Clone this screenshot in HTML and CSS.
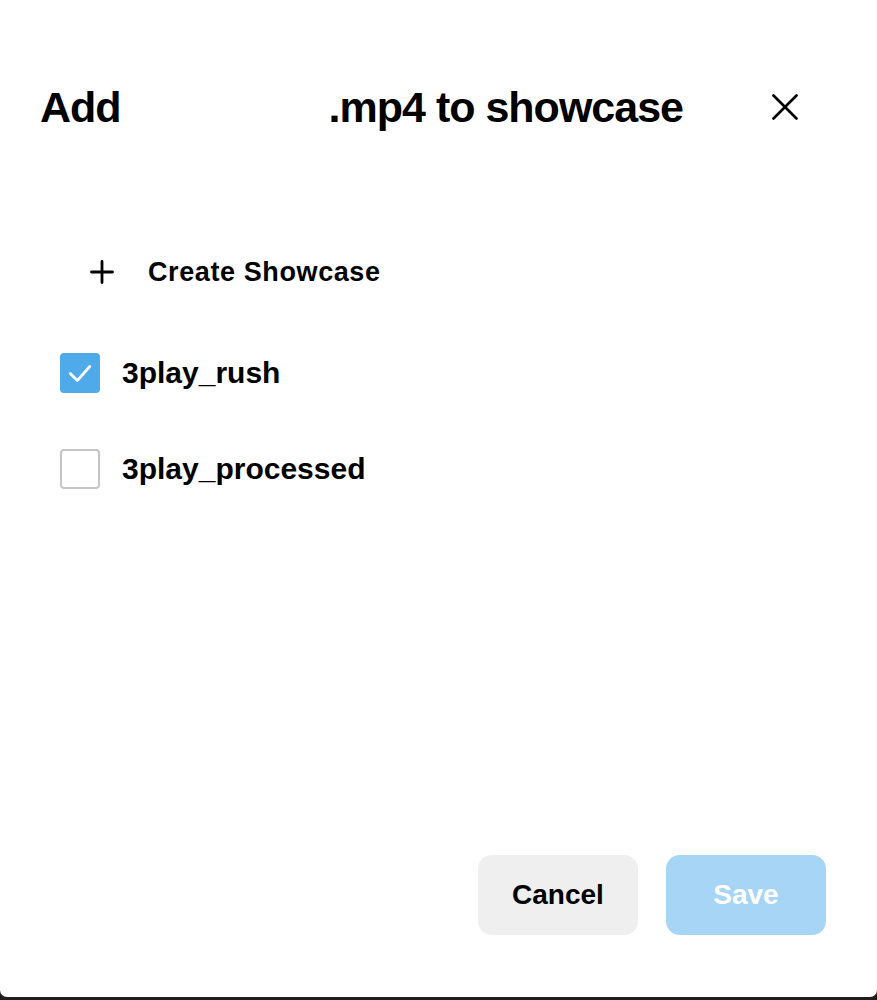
FILE: index.html
```html
<!DOCTYPE html>
<html lang="en">
<head>
  <meta charset="UTF-8">
  <meta name="viewport" content="width=device-width, initial-scale=1.0">
  <title>Add to showcase</title>
  <link rel="stylesheet" href="styles.css">
</head>
<body>
  <div class="dialog">
    <div class="header">
      <h1>Add<span class="redacted"></span>.mp4 to showcase</h1>
      <button class="close" aria-label="Close">
        <svg width="26" height="26" viewBox="0 0 26 26">
          <path d="M1.5 1.5 L24.5 24.5 M24.5 1.5 L1.5 24.5" stroke="#000" stroke-width="2.6" stroke-linecap="round"/>
        </svg>
      </button>
    </div>

    <div class="list">
      <button class="create">
        <svg width="24" height="24" viewBox="0 0 24 24">
          <path d="M12 1.5 V22.5 M1.5 12 H22.5" stroke="#000" stroke-width="2.8" stroke-linecap="round"/>
        </svg>
        <span>Create Showcase</span>
      </button>

      <label class="option">
        <span class="box checked">
          <svg width="26" height="26" viewBox="0 0 24 24">
            <path d="M3 12.5 L9.5 19 L21 6" fill="none" stroke="#fff" stroke-width="2.6" stroke-linecap="round" stroke-linejoin="round"/>
          </svg>
        </span>
        <span class="name">3play_rush</span>
      </label>

      <label class="option">
        <span class="box"></span>
        <span class="name">3play_processed</span>
      </label>
    </div>

    <div class="footer">
      <button class="btn cancel">Cancel</button>
      <button class="btn save">Save</button>
    </div>
  </div>
</body>
</html>
```

FILE: styles.css
```css
body {
  margin: 0;
  padding: 0;
  background: #1e1e1e;
  font-family: 'Liberation Sans', Arial, sans-serif;
  color: #000;
}

.dialog {
  height: 997px;
  background: #fff;
  border-radius: 0 0 7px 7px;
  display: flex;
  flex-direction: column;
  box-sizing: border-box;
}

.header {
  display: flex;
  align-items: center;
  justify-content: space-between;
  padding: 80px 67px 0 40px;
}

h1 {
  margin: 0;
  font-size: 43px;
  line-height: 54px;
  font-weight: bold;
  letter-spacing: -1px;
}

.redacted {
  display: inline-block;
  width: 208px;
}

.close {
  width: 50px;
  height: 50px;
  border: none;
  background: none;
  padding: 0;
  display: flex;
  align-items: center;
  justify-content: center;
  cursor: pointer;
}

.list {
  display: flex;
  flex-direction: column;
  gap: 56px;
  padding: 114px 40px 0 60px;
}

.create {
  display: flex;
  align-items: center;
  gap: 34px;
  height: 48px;
  margin-left: 30px;
  margin-bottom: 1px;
  padding: 0;
  border: none;
  background: none;
  font-family: inherit;
  font-size: 27px;
  font-weight: bold;
  letter-spacing: 0.6px;
  color: #000;
  cursor: pointer;
}

.option {
  display: flex;
  align-items: center;
  gap: 22px;
  height: 40px;
  cursor: pointer;
}

.box {
  width: 40px;
  height: 40px;
  box-sizing: border-box;
  border: 2px solid #c6c6c6;
  border-radius: 4px;
  display: flex;
  align-items: center;
  justify-content: center;
  flex-shrink: 0;
}

.box.checked {
  background: #4eaae9;
  border-color: #4eaae9;
}

.name {
  font-size: 30px;
  font-weight: bold;
}

.footer {
  margin-top: auto;
  display: flex;
  justify-content: flex-end;
  gap: 28px;
  padding: 0 51px 62px 0;
}

.btn {
  width: 160px;
  height: 80px;
  border: none;
  border-radius: 14px;
  font-family: inherit;
  font-size: 28px;
  font-weight: bold;
  cursor: pointer;
}

.cancel {
  background: #efefef;
  color: #000;
}

.save {
  background: #a7d5f5;
  color: #fff;
}
```
